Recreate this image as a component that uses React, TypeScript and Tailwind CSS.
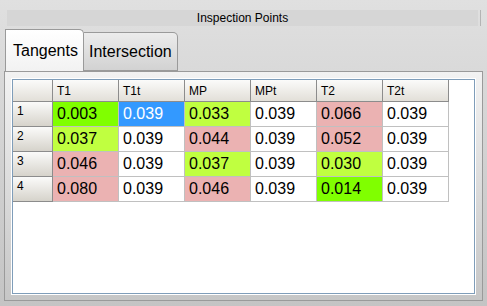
type Cell = { v: string; c: "g" | "l" | "p" | "w" | "s" };

const headers = ["T1", "T1t", "MP", "MPt", "T2", "T2t"];

const rows: Cell[][] = [
  [
    { v: "0.003", c: "g" },
    { v: "0.039", c: "s" },
    { v: "0.033", c: "l" },
    { v: "0.039", c: "w" },
    { v: "0.066", c: "p" },
    { v: "0.039", c: "w" },
  ],
  [
    { v: "0.037", c: "l" },
    { v: "0.039", c: "w" },
    { v: "0.044", c: "p" },
    { v: "0.039", c: "w" },
    { v: "0.052", c: "p" },
    { v: "0.039", c: "w" },
  ],
  [
    { v: "0.046", c: "p" },
    { v: "0.039", c: "w" },
    { v: "0.037", c: "l" },
    { v: "0.039", c: "w" },
    { v: "0.030", c: "l" },
    { v: "0.039", c: "w" },
  ],
  [
    { v: "0.080", c: "p" },
    { v: "0.039", c: "w" },
    { v: "0.046", c: "p" },
    { v: "0.039", c: "w" },
    { v: "0.014", c: "g" },
    { v: "0.039", c: "w" },
  ],
];

const cellColor: Record<Cell["c"], string> = {
  g: "bg-[#80ff00] text-black",
  l: "bg-[#c0ff40] text-black",
  p: "bg-[#ebb2b2] text-black",
  w: "bg-white text-black",
  s: "bg-[#3399ff] text-white",
};

export default function App() {
  return (
    <div className="flex h-[306px] w-[487px] flex-col bg-gradient-to-b from-[#e0e0e0] to-[#c4c4c4] font-['Liberation_Sans',Arial,sans-serif]">
      {/* title */}
      <div className="mt-[10px] flex h-4 items-center pl-[7px] pr-[6px]">
        <div className="flex h-4 flex-1 items-center justify-center bg-[#d6d6d6] text-[12px] text-black">
          Inspection Points
        </div>
        <div className="ml-[2px] h-4 w-px bg-[#b4b4b4]" />
      </div>

      {/* tabs */}
      <div className="ml-[5px] mt-1 flex h-[41px] items-end">
        <div className="relative z-10 flex h-[42px] w-[79px] items-center rounded-tr-[5px] border border-b-0 border-[#9a9a9a] bg-gradient-to-b from-white to-[#f2f2f2] pl-[7px] text-[16px] text-black">
          Tangents
        </div>
        <div className="flex h-[39px] w-[94px] items-center rounded-tr-[5px] border border-l-0 border-[#9a9a9a] bg-gradient-to-b from-[#ececec] to-[#d2d2d2] pl-[5px] text-[16px] text-black">
          Intersection
        </div>
      </div>

      {/* panel */}
      <div className="ml-1 mr-1 flex h-[230px] flex-col border border-[#9a9a9a] bg-gradient-to-b from-[#f2f2f2] to-[#c6c6c6] px-[6px] pb-[5px] pt-[6px]">
        <div className="flex-1 border border-white">
          <div className="h-full border border-[#7f9db9] bg-white">
            <div className="grid w-fit grid-cols-[40px_repeat(6,66px)] grid-rows-[22px_repeat(4,25px)] text-black">
              <div className="border-b border-r border-[#8c8c8c] bg-gradient-to-b from-[#fbfbfa] to-[#e2dfd8]" />
              {headers.map((h) => (
                <div
                  key={h}
                  className="flex items-center border-b border-r border-[#8c8c8c] bg-gradient-to-b from-[#fbfbfa] to-[#e2dfd8] pl-1 text-[12px]"
                >
                  {h}
                </div>
              ))}
              {rows.map((row, i) => (
                <div key={i} className="contents">
                  <div className="border-b border-r border-[#8c8c8c] bg-gradient-to-b from-[#fbfbfa] to-[#d6d3cb] pl-1 pt-[2px] text-[12px] leading-[14px]">
                    {i + 1}
                  </div>
                  {row.map((c, j) => (
                    <div
                      key={j}
                      className={`flex items-center border-b border-r border-[#c0c0c0] pl-1 text-[16px] ${cellColor[c.c]}`}
                    >
                      {c.v}
                    </div>
                  ))}
                </div>
              ))}
            </div>
          </div>
        </div>
      </div>
    </div>
  );
}
